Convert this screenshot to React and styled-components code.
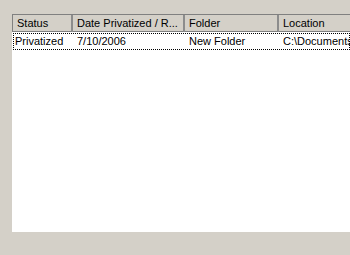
import React from 'react';
import styled, {createGlobalStyle} from 'styled-components';

const Global = createGlobalStyle`
    html, body {
        margin: 0;
        padding: 0;
        background: #d4d0c8;
        font-family: Tahoma, "DejaVu Sans", "Liberation Sans", sans-serif;
        font-size: 11px;
    }
`;

const Page = styled.div`
    width: 350px;
    height: 255px;
    padding: 14px 0 0 12px;
    box-sizing: border-box;
    overflow: hidden;
`;

const ListView = styled.div`
    width: 338px;
    height: 218px;
    background: #fff;
    display: flex;
    flex-direction: column;
    overflow: hidden;
`;

const Header = styled.div`
    display: flex;
    height: 18px;
    flex-shrink: 0;
    background: #d4d0c8;
    border-top: 1px solid #808080;
    border-left: 1px solid #808080;
    box-sizing: border-box;
`;

const HeaderCell = styled.div`
    width: ${p => p.width}px;
    flex-shrink: 0;
    box-sizing: border-box;
    padding: 0 0 0 4px;
    border-right: 2px solid #8c8c8c;
    border-bottom: 1px solid #808080;
    line-height: 16px;
    color: #000;
    white-space: nowrap;
    overflow: hidden;
    font-family: "Liberation Sans", sans-serif;
    font-size: 11px;
`;

const Body = styled.div`
    flex: 1;
    padding-top: 1px;
`;

const Row = styled.div`
    display: flex;
    height: 17px;
    margin-left: 1px;
    border: 1px dotted #000;
    box-sizing: border-box;
`;

const Cell = styled.div`
    width: ${p => p.width}px;
    flex-shrink: 0;
    padding-left: ${p => p.pad}px;
    box-sizing: border-box;
    line-height: 15px;
    white-space: nowrap;
    overflow: hidden;
    font-family: "Liberation Sans", sans-serif;
    font-size: 11px;
    color: #000;
`;

const columns = [
    {title: 'Status', width: 60},
    {title: 'Date Privatized / R...', width: 112},
    {title: 'Folder', width: 94},
    {title: 'Location', width: 80},
];

const rows = [
    ['Privatized', '7/10/2006', 'New Folder', 'C:\\Documents and Settings'],
];

export default function App() {
    return (
        <Page>
            <Global />
            <ListView>
                <Header>
                    {columns.map(c => (
                        <HeaderCell key={c.title} width={c.width}>{c.title}</HeaderCell>
                    ))}
                </Header>
                <Body>
                    {rows.map((r, i) => (
                        <Row key={i}>
                            {r.map((v, j) => (
                                <Cell key={j} width={columns[j].width - (j === 0 ? 1 : 0)} pad={j === 0 ? 1 : 4}>{v}</Cell>
                            ))}
                        </Row>
                    ))}
                </Body>
            </ListView>
        </Page>
    );
}
